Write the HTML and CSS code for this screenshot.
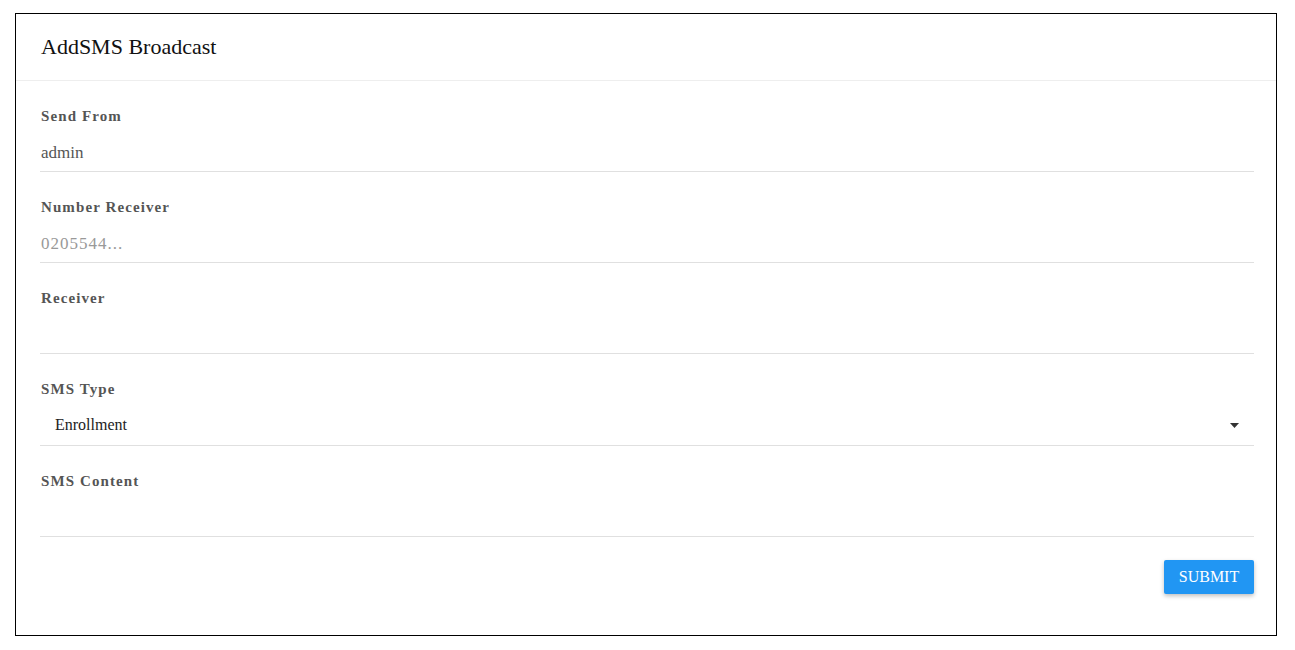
FILE: index.html
```html
<!DOCTYPE html>
<html>
<head>
<meta charset="utf-8">
<link rel="stylesheet" href="styles.css">
</head>
<body>
<div class="card">
  <div class="card-header">AddSMS Broadcast</div>
  <form class="card-body">
    <div class="field">
      <label class="label">Send From</label>
      <div class="input value">admin</div>
    </div>
    <div class="field">
      <label class="label">Number Receiver</label>
      <div class="input placeholder">0205544...</div>
    </div>
    <div class="field">
      <label class="label">Receiver</label>
      <div class="input"></div>
    </div>
    <div class="field">
      <label class="label">SMS Type</label>
      <div class="input select">
        <span class="select-text">Enrollment</span>
        <svg class="caret" width="9" height="5" viewBox="0 0 9 5"><path d="M0 0h9L4.5 5z" fill="#333"/></svg>
      </div>
    </div>
    <div class="field">
      <label class="label">SMS Content</label>
      <div class="input"></div>
    </div>
    <div class="actions">
      <button type="button" class="btn">SUBMIT</button>
    </div>
  </form>
</div>
</body>
</html>
```
FILE: styles.css
```css
html, body {
  margin: 0;
  padding: 0;
  background: #fff;
}
body {
  padding: 13px 18px 0 15px;
  font-family: "Liberation Serif", "Times New Roman", serif;
}
.card {
  border: 1px solid #000;
  height: 621px;
  box-sizing: content-box;
  background: #fff;
}
.card-header {
  height: 67px;
  box-sizing: border-box;
  padding: 20px 25px 0;
  font-size: 22px;
  line-height: 26px;
  color: #111;
  border-bottom: 1px solid #eee;
}
.card-body {
  padding: 25px 22px 0 24px;
  display: flex;
  flex-direction: column;
  gap: 25px;
}
.field {
  display: flex;
  flex-direction: column;
  gap: 6px;
}
.label {
  padding-left: 1px;
  font-weight: bold;
  font-size: 15px;
  line-height: 20px;
  letter-spacing: 1.1px;
  color: #555;
}
.input {
  height: 40px;
  box-sizing: border-box;
  border-bottom: 1px solid #e0e0e0;
  display: flex;
  align-items: center;
  padding: 3px 0 0 1px;
  font-size: 17px;
}
.value {
  color: #555;
}
.placeholder {
  color: #999;
  letter-spacing: 1px;
}
.select {
  height: 41px;
  justify-content: space-between;
  padding: 0 15px 0 15px;
}
.select-text {
  font-size: 16px;
  color: #222;
}
.caret {
  display: block;
}
.actions {
  display: flex;
  justify-content: flex-end;
  margin-top: -2px;
}
.btn {
  width: 90px;
  height: 34px;
  border: none;
  border-radius: 2px;
  background: #2196f3;
  color: #fff;
  font-family: "Liberation Serif", "Times New Roman", serif;
  font-size: 16px;
  box-shadow: 0 2px 4px rgba(0,0,0,0.25);
  padding: 0;
}
```
